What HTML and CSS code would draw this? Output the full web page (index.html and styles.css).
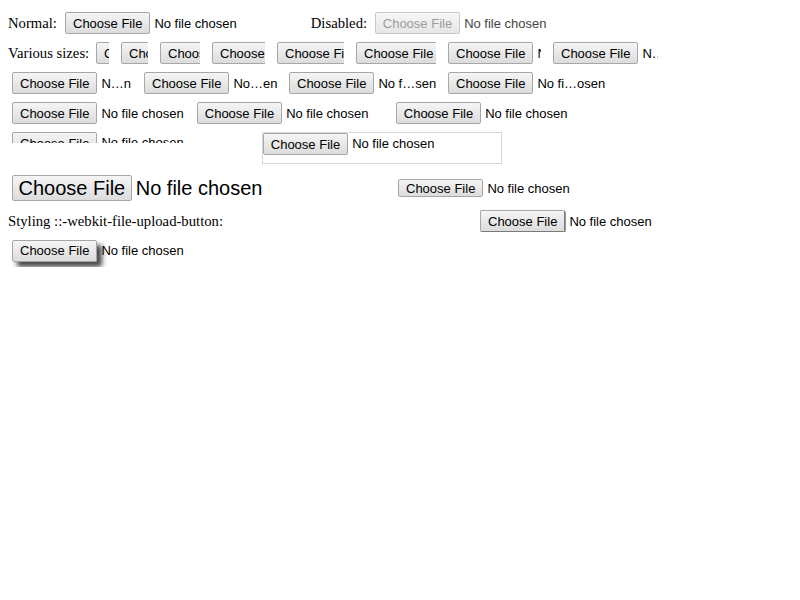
FILE: index.html
```html
<!DOCTYPE html>
<html>
<head>
<meta charset="utf-8">
<link rel="stylesheet" href="styles.css">
</head>
<body>
<div class="row">
  <span class="label lbl-normal">Normal:</span>
  <div class="file"><span class="btn">Choose File</span><span class="name">No file chosen</span></div>
  <span class="label lbl-disabled">Disabled:</span>
  <div class="file disabled"><span class="btn">Choose File</span><span class="name">No file chosen</span></div>
</div>
<div class="row sizes">
  <span class="label lbl-sizes">Various sizes:</span>
  <div class="file w1"><span class="btn">Choose File</span><span class="name">No file chosen</span></div>
  <div class="file w2"><span class="btn">Choose File</span><span class="name">No file chosen</span></div>
  <div class="file w3"><span class="btn">Choose File</span><span class="name">No file chosen</span></div>
  <div class="file w4"><span class="btn">Choose File</span><span class="name">No file chosen</span></div>
  <div class="file w5"><span class="btn">Choose File</span><span class="name">No file chosen</span></div>
  <div class="file w6"><span class="btn">Choose File</span><span class="name">No file chosen</span></div>
  <div class="file w7"><span class="btn">Choose File</span><span class="name">N</span></div>
  <div class="file w8"><span class="btn">Choose File</span><span class="name">N…</span></div>
</div>
<div class="row indent trunc">
  <div class="file t1"><span class="btn">Choose File</span><span class="name">N…n</span></div>
  <div class="file t2"><span class="btn">Choose File</span><span class="name">No…en</span></div>
  <div class="file t3"><span class="btn">Choose File</span><span class="name">No f…sen</span></div>
  <div class="file t4"><span class="btn">Choose File</span><span class="name">No fi…osen</span></div>
</div>
<div class="row indent aligns">
  <div class="file"><span class="btn">Choose File</span><span class="name">No file chosen</span></div>
  <div class="file wide"><span class="btn">Choose File</span><span class="name">No file chosen</span></div>
  <div class="file"><span class="btn">Choose File</span><span class="name">No file chosen</span></div>
</div>
<div class="row indent tall">
  <div class="file clipped"><span class="btn">Choose File</span><span class="name">No file chosen</span></div>
  <div class="file boxed"><span class="btn">Choose File</span><span class="name">No file chosen</span></div>
</div>
<div class="row indent big-row">
  <div class="file big"><span class="btn">Choose File</span><span class="name">No file chosen</span></div>
  <div class="file short"><span class="btn">Choose File</span><span class="name">No file chosen</span></div>
</div>
<div class="row styling">
  <span class="label lbl-styling">Styling ::-webkit-file-upload-button:</span>
  <div class="file raised"><span class="btn">Choose File</span><span class="name">No file chosen</span></div>
</div>
<div class="row indent shadow-row">
  <div class="file shadowed"><span class="btn">Choose File</span><span class="name">No file chosen</span></div>
</div>
</body>
</html>
```

FILE: styles.css
```css
body {
  margin: 8px;
  font-family: "Liberation Serif", "Times New Roman", serif;
  font-size: 14.7px;
  color: #000;
  background: #fff;
}

.row {
  display: flex;
  align-items: center;
  height: 30px;
  white-space: nowrap;
}

.indent {
  padding-left: 4px;
}

.label {
  flex: none;
}

.lbl-normal { width: 57px; }
.lbl-disabled { width: 64px; margin-left: 74px; }
.lbl-sizes { width: 88px; }
.lbl-styling { width: 472px; }

.file {
  display: flex;
  align-items: center;
  flex: none;
  overflow: hidden;
  font-family: "Liberation Sans", Arial, sans-serif;
  font-size: 13px;
  color: #000;
}

.btn {
  box-sizing: border-box;
  display: flex;
  align-items: center;
  flex: none;
  height: 22px;
  padding: 0 7px;
  border: 1px solid #a7a7a7;
  border-radius: 2px;
  background: linear-gradient(#f5f5f5, #dcdcdc);
  line-height: 1;
}

.name {
  flex: none;
  margin-left: 4px;
}

.disabled .btn {
  color: #9c9c9c;
  border-color: #c9c9c9;
  background: linear-gradient(#f7f7f7, #e6e6e6);
}

.disabled .name {
  color: #444;
}

/* various sizes */
.sizes { gap: 12px; }
.sizes .label { margin-right: -12px; }
.w1 { width: 13px; }
.w2 { width: 27px; }
.w3 { width: 40px; }
.w4 { width: 53px; }
.w5 { width: 67px; }
.w6 { width: 80px; }
.w7 { width: 93px; }
.w8 { width: 105px; }

/* truncated names */
.trunc { gap: 12px; }
.t1 { width: 120px; }
.t2 { width: 133px; }
.t3 { width: 147px; }
.t4 { width: 160px; }

/* alignment row */
.aligns { gap: 13px; }
.wide { width: 186px; }

/* tall row */
.tall {
  height: 40px;
  align-items: flex-start;
  padding-top: 4px;
  box-sizing: border-box;
}

.clipped {
  height: 11px;
  align-items: flex-start;
}

.clipped .name {
  line-height: 22px;
}

.boxed {
  box-sizing: border-box;
  width: 240px;
  height: 32px;
  margin-left: 78px;
  border: 1px solid #d6d6d6;
  align-items: flex-start;
}

.boxed .name {
  line-height: 22px;
}

/* big row */
.big-row { height: 40px; }

.big {
  width: 252px;
  font-size: 20px;
}

.big .btn {
  height: 26px;
  padding: 0 5.5px;
}

.short { margin-left: 134px; }

.short .btn { height: 18px; }

/* styling row */
.styling { height: 26px; }

.raised .btn {
  border-color: #a7a7a7 #7a7a7a #7a7a7a #a7a7a7;
  box-shadow: 1px 1px 0 #9a9a9a;
}

/* shadow row */
.shadow-row { height: 33px; }

.shadowed { overflow: visible; }

.shadowed .btn {
  box-shadow: 5px 5px 5px #4a4a4a;
}

.shadowed .name {
  position: relative;
}
```
